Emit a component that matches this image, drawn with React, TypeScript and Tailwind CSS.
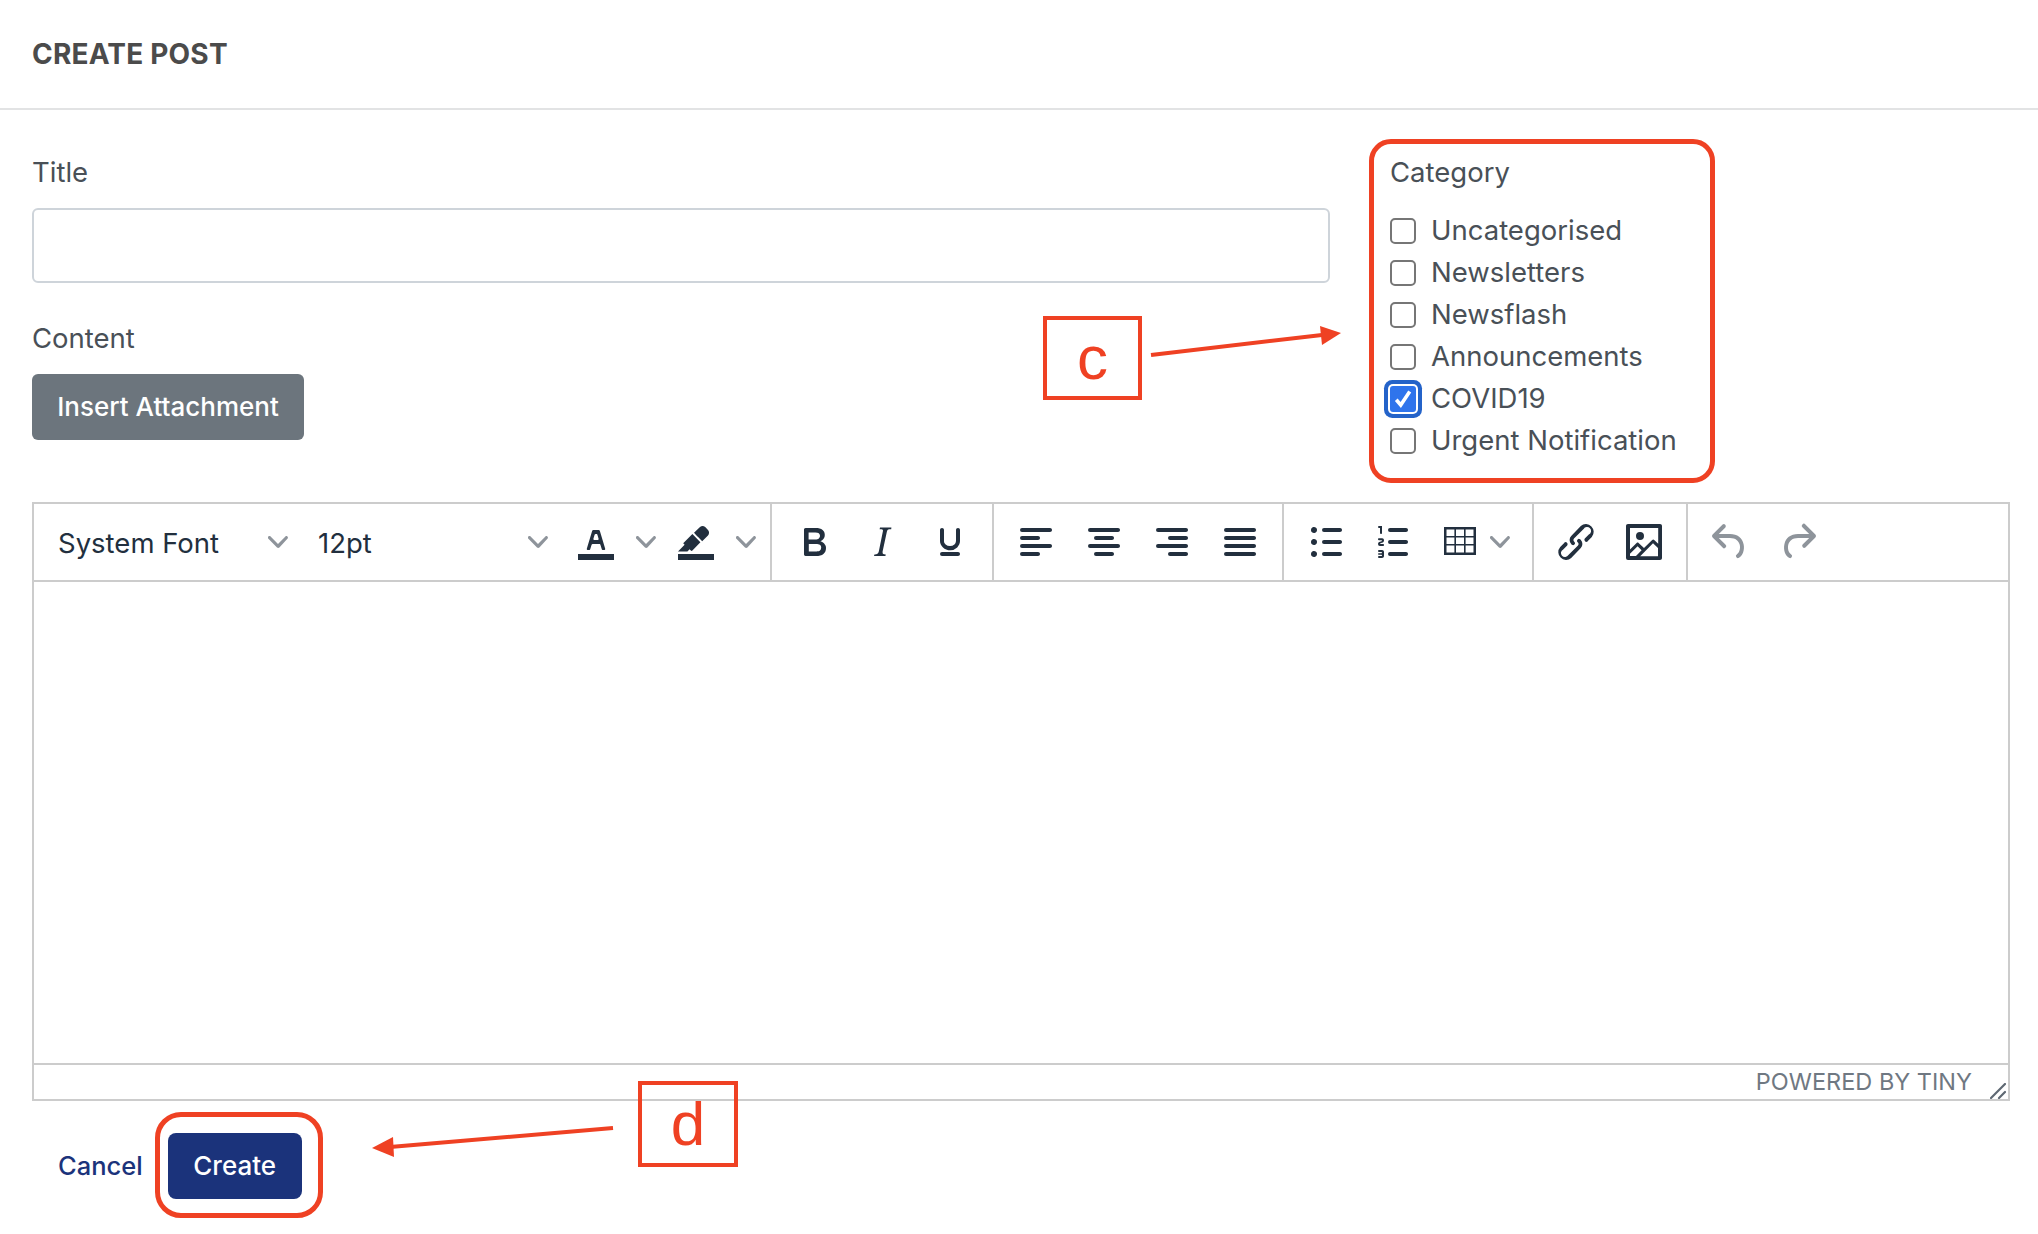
const F = "fill-[#222f3e]";

const Chevron = ({ className = "" }: { className?: string }) => (
  <svg viewBox="0 0 10 10" className={`w-5 h-5 fill-[#8e949b] shrink-0 ${className}`}>
    <path d="M8.7 2.2c.3-.3.8-.3 1 0 .4.4.4.9 0 1.2L5.7 7.8c-.3.3-.9.3-1.2 0L.2 3.4a.8.8 0 0 1 0-1.2c.3-.3.8-.3 1.1 0L5 6l3.7-3.8z" />
  </svg>
);

const Icon = ({ d, className = F }: { d: string; className?: string }) => (
  <svg viewBox="0 0 24 24" className={`w-12 h-12 shrink-0 ${className}`}>
    <path d={d} fillRule="evenodd" />
  </svg>
);

const ToolBtn = ({ d, className }: { d: string; className?: string }) => (
  <button className="w-[68px] h-[68px] flex items-center justify-center">
    <Icon d={d} className={className} />
  </button>
);

const icons = {
  bold: "M7.8 19c-.3 0-.5 0-.6-.2l-.2-.5V5.7c0-.2 0-.4.2-.5l.6-.2h5c1.5 0 2.7.3 3.5 1 .7.6 1.1 1.4 1.1 2.5a3 3 0 0 1-.6 1.9c-.4.6-1 1-1.6 1.2.4.1.9.3 1.3.6s.8.7 1 1.2c.4.4.5 1 .5 1.6 0 1.3-.4 2.3-1.3 3-.8.7-2.1 1-3.8 1H7.8zm5-8.3c.6 0 1.2-.1 1.6-.5.4-.3.6-.7.6-1.3 0-1.1-.8-1.7-2.3-1.7H9.3v3.5h3.4zm.5 6c.7 0 1.3-.1 1.7-.4.4-.4.6-.9.6-1.5s-.2-1-.7-1.4c-.4-.3-1-.4-2-.4H9.4v3.8h4z",
  italic: "M16.7 4.7l-.1.9h-.3c-.6 0-1 0-1.4.3-.3.3-.4.6-.5 1.1l-2.1 9.8v.6c0 .5.4.8 1.4.8h.2l-.2.8H8l.2-.8h.2c1.1 0 1.8-.5 2-1.5l2-9.8.1-.5c0-.6-.4-.8-1.4-.8h-.3l.2-.9h5.8z",
  underline: "M16 5c.6 0 1 .4 1 1v5.5a4 4 0 0 1-.4 1.8l-1 1.4a5.3 5.3 0 0 1-5.5 1 5 5 0 0 1-1.6-1c-.5-.4-.8-.9-1.1-1.4a4 4 0 0 1-.4-1.8V6c0-.6.4-1 1-1s1 .4 1 1v5.5c0 .3 0 .6.2 1l.6.7a3.3 3.3 0 0 0 2.2.8 3.4 3.4 0 0 0 2.2-.8c.3-.2.4-.5.6-.8l.2-.9V6c0-.6.4-1 1-1zM8 17h8c.6 0 1 .4 1 1s-.4 1-1 1H8a1 1 0 0 1 0-2z",
  left: "M5 5h14c.6 0 1 .4 1 1s-.4 1-1 1H5a1 1 0 1 1 0-2zm0 4h8c.6 0 1 .4 1 1s-.4 1-1 1H5a1 1 0 1 1 0-2zm0 8h8c.6 0 1 .4 1 1s-.4 1-1 1H5a1 1 0 0 1 0-2zm0-4h14c.6 0 1 .4 1 1s-.4 1-1 1H5a1 1 0 0 1 0-2z",
  center: "M5 5h14c.6 0 1 .4 1 1s-.4 1-1 1H5a1 1 0 1 1 0-2zm3 4h8c.6 0 1 .4 1 1s-.4 1-1 1H8a1 1 0 1 1 0-2zm0 8h8c.6 0 1 .4 1 1s-.4 1-1 1H8a1 1 0 0 1 0-2zm-3-4h14c.6 0 1 .4 1 1s-.4 1-1 1H5a1 1 0 0 1 0-2z",
  right: "M5 5h14c.6 0 1 .4 1 1s-.4 1-1 1H5a1 1 0 1 1 0-2zm6 4h8c.6 0 1 .4 1 1s-.4 1-1 1h-8a1 1 0 0 1 0-2zm0 8h8c.6 0 1 .4 1 1s-.4 1-1 1h-8a1 1 0 0 1 0-2zm-6-4h14c.6 0 1 .4 1 1s-.4 1-1 1H5a1 1 0 0 1 0-2z",
  justify: "M5 5h14c.6 0 1 .4 1 1s-.4 1-1 1H5a1 1 0 1 1 0-2zm0 4h14c.6 0 1 .4 1 1s-.4 1-1 1H5a1 1 0 1 1 0-2zm0 4h14c.6 0 1 .4 1 1s-.4 1-1 1H5a1 1 0 0 1 0-2zm0 4h14c.6 0 1 .4 1 1s-.4 1-1 1H5a1 1 0 0 1 0-2z",
  bullets: "M11 5h8c.6 0 1 .4 1 1s-.4 1-1 1h-8a1 1 0 0 1 0-2zm0 6h8c.6 0 1 .4 1 1s-.4 1-1 1h-8a1 1 0 0 1 0-2zm0 6h8c.6 0 1 .4 1 1s-.4 1-1 1h-8a1 1 0 0 1 0-2zM4.5 6c0-.4.1-.8.4-1 .3-.4.7-.5 1.1-.5.4 0 .8.1 1 .4.4.3.5.7.5 1.1 0 .4-.1.8-.4 1-.3.4-.7.5-1.1.5-.4 0-.8-.1-1-.4-.4-.3-.5-.7-.5-1.1zm0 6c0-.4.1-.8.4-1 .3-.4.7-.5 1.1-.5.4 0 .8.1 1 .4.4.3.5.7.5 1.1 0 .4-.1.8-.4 1-.3.4-.7.5-1.1.5-.4 0-.8-.1-1-.4-.4-.3-.5-.7-.5-1.1zm0 6c0-.4.1-.8.4-1 .3-.4.7-.5 1.1-.5.4 0 .8.1 1 .4.4.3.5.7.5 1.1 0 .4-.1.8-.4 1-.3.4-.7.5-1.1.5-.4 0-.8-.1-1-.4-.4-.3-.5-.7-.5-1.1z",
  numbers: "M10 17h8c.6 0 1 .4 1 1s-.4 1-1 1h-8a1 1 0 0 1 0-2zm0-6h8c.6 0 1 .4 1 1s-.4 1-1 1h-8a1 1 0 0 1 0-2zm0-6h8c.6 0 1 .4 1 1s-.4 1-1 1h-8a1 1 0 1 1 0-2zM6 4v3.5c0 .3-.2.5-.5.5a.5.5 0 0 1-.5-.5V5h-.5a.5.5 0 0 1 0-1H6zm-1 8.8l.2.2h1.3c.3 0 .5.2.5.5s-.2.5-.5.5H4.9a1 1 0 0 1-.9-1V13c0-.4.3-.8.6-1l1.2-.4.2-.3a.2.2 0 0 0-.2-.2H4.5a.5.5 0 0 1-.5-.5c0-.3.2-.5.5-.5h1.6c.5 0 .9.4.9 1v.1c0 .4-.3.8-.6 1l-1.2.4-.2.3zM7 17v2c0 .6-.4 1-1 1H4.5a.5.5 0 0 1 0-1h1.2c.2 0 .3-.1.3-.3 0-.2-.1-.3-.3-.3H4.4a.4.4 0 1 1 0-.8h1.3c.2 0 .3-.1.3-.3 0-.2-.1-.3-.3-.3H4.5a.5.5 0 1 1 0-1H6c.6 0 1 .4 1 1z",
  table: "M4 4.5h16v14H4zM5.25 5.75V9h3.95V5.75zM10 5.75V9h4V5.75zM14.8 5.75V9h3.95V5.75zM5.25 9.8V13h3.95V9.8zM10 9.8V13h4V9.8zM14.8 9.8V13h3.95V9.8zM5.25 13.8v3.45h3.95V13.8zM10 13.8v3.45h4V13.8zM14.8 13.8v3.45h3.95V13.8z",
  link: "M6.2 12.3a1 1 0 0 1 1.4 1.4l-2 2a2 2 0 1 0 2.6 2.8l4.8-4.8a1 1 0 0 0 0-1.4 1 1 0 1 1 1.4-1.3 2.9 2.9 0 0 1 0 4L9.6 20a3.9 3.9 0 0 1-5.5-5.5l2-2zm11.6-.6a1 1 0 0 1-1.4-1.4l2-2a2 2 0 1 0-2.6-2.8L11 10.3a1 1 0 0 0 0 1.4A1 1 0 1 1 9.6 13a2.9 2.9 0 0 1 0-4L14.4 4a3.9 3.9 0 0 1 5.5 5.5l-2 2z",
  image: "M5 15.7l3.3-3.2c.3-.3.7-.3 1 0L12 15l4.1-4c.3-.4.8-.4 1 0l2 1.9V5H5v10.7zM5 18V19h3l2.8-2.9-2-2L5 17.9zm14-3l-2.5-2.4-6.4 6.5H19v-4zM4 3h16c.6 0 1 .4 1 1v16c0 .6-.4 1-1 1H4a1 1 0 0 1-1-1V4c0-.6.4-1 1-1zm6 8a2 2 0 1 0 0-4 2 2 0 0 0 0 4z",
  undo: "M6.4 8H12c3.7 0 6.2 2 6.8 5.1.6 2.7-.4 5.6-2.3 6.8a1 1 0 0 1-1-1.8c1.1-.6 1.8-2.7 1.4-4.6-.5-2.1-2.1-3.5-4.9-3.5H6.4l3.3 3.3a1 1 0 1 1-1.4 1.4l-5-5a1 1 0 0 1 0-1.4l5-5a1 1 0 0 1 1.4 1.4L6.4 8z",
  redo: "M17.6 10H12c-2.8 0-4.4 1.4-4.9 3.5-.4 2 .3 4 1.4 4.6a1 1 0 1 1-1 1.8c-2-1.2-2.9-4.1-2.3-6.8.6-3 3-5.1 6.8-5.1h5.6l-3.3-3.3a1 1 0 1 1 1.4-1.4l5 5a1 1 0 0 1 0 1.4l-5 5a1 1 0 0 1-1.4-1.4l3.3-3.3z",
  textColor: "M3 18h18v3H3zM8.7 16h-.8a.5.5 0 0 1-.5-.6l2.7-9c.1-.3.3-.4.5-.4h2.8c.2 0 .4.1.5.4l2.7 9a.5.5 0 0 1-.5.6h-.8a.5.5 0 0 1-.4-.4l-.7-2.2c0-.3-.3-.4-.5-.4h-3.4c-.2 0-.4.1-.5.4l-.7 2.2c0 .3-.2.4-.4.4zm2.6-7.6l-.6 2a.5.5 0 0 0 .5.6h1.6a.5.5 0 0 0 .5-.6l-.6-2c0-.3-.3-.4-.5-.4h-.4c-.2 0-.4.1-.5.4z",
  highlight: "M3 18h18v3H3zM7.7 16.7H3l3.3-3.3-.7-.8L10.2 8l4 4.1-4 4.2c-.2.2-.6.2-.8 0l-.6-.7-1.1 1.1zm5-7.5L11 7.4l3-2.9a2 2 0 0 1 2.6 0L18 6c.7.7.7 2 0 2.7l-2.9 2.9-1.8-1.8-.5-.6",
};

const categories = [
  { name: "Uncategorised", checked: false },
  { name: "Newsletters", checked: false },
  { name: "Newsflash", checked: false },
  { name: "Announcements", checked: false },
  { name: "COVID19", checked: true },
  { name: "Urgent Notification", checked: false },
];

const CategoryRow = ({ name, checked }: { name: string; checked: boolean }) => (
  <div className="h-[42px] flex items-center gap-[15px]">
    {checked ? (
      <span className="w-[26px] h-[26px] rounded-[3px] bg-[#2f74ec] flex items-center justify-center shadow-[0_0_0_2px_#fff,0_0_0_6px_#2463c9]">
        <svg viewBox="0 0 16 16" className="w-[24px] h-[24px] fill-none stroke-white stroke-[2.4]">
          <path d="M3.5 8.5l3 3.5L12.5 3" />
        </svg>
      </span>
    ) : (
      <span className="w-[26px] h-[26px] rounded-[5px] border-2 border-[#767676] bg-white" />
    )}
    <span className="text-[27.5px] text-[#495057]">{name}</span>
  </div>
);

export default function App() {
  return (
    <div className="relative w-[2038px] h-[1234px] overflow-hidden bg-white font-['Inter',sans-serif]">
      <header className="h-[110px] border-b-2 border-[#e2e3e4] px-8 flex items-center">
        <h1 className="text-[28px] font-bold text-[#4b4b4b] tracking-[0.2px]">CREATE POST</h1>
      </header>

      <main className="px-8 pt-[43px]">
        <div className="flex gap-[60px]">
          <div className="w-[1298px]">
            <label className="block h-9 pt-px leading-9 text-[27.5px] text-[#495057]">Title</label>
            <input className="block mt-[19px] w-full h-[75px] rounded-[6px] border-2 border-[#ced4da] bg-white" />
            <label className="block mt-[37px] h-9 leading-9 text-[27.5px] text-[#495057]">Content</label>
            <button className="block mt-[18px] w-[272px] h-[66px] pb-[2px] rounded-[6px] bg-[#6c757d] text-[26px] font-medium text-white">
              Insert Attachment
            </button>
          </div>
          <div>
            <div className="h-9 pt-px leading-9 text-[27.5px] text-[#495057]">Category</div>
            <div className="mt-[21px]">
              {categories.map((c) => (
                <CategoryRow key={c.name} name={c.name} checked={c.checked} />
              ))}
            </div>
          </div>
        </div>

        <section className="mt-10 w-[1978px] h-[599px] border-2 border-[#cccccc] flex flex-col text-[#222f3e]">
          <div className="h-[78px] border-b-2 border-[#cccccc] flex items-center shrink-0">
            <div className="w-[736px] h-full flex items-center">
              <div className="w-[260px] pl-6 pr-[6px] flex items-center justify-between text-[27.5px]">
                <span className="pt-[3px]">System Font</span>
                <Chevron />
              </div>
              <div className="w-[260px] pl-6 pr-[6px] flex items-center justify-between text-[27.5px]">
                <span className="pt-[3px]">12pt</span>
                <Chevron />
              </div>
              <Icon d={icons.textColor} className={`ml-[18px] ${F}`} />
              <Chevron className="ml-4" />
              <Icon d={icons.highlight} className={`ml-4 ${F}`} />
              <Chevron className="ml-4" />
            </div>
            <div className="h-full border-l-2 border-[#cccccc] px-2 flex items-center">
              <ToolBtn d={icons.bold} />
              <ToolBtn d={icons.italic} />
              <ToolBtn d={icons.underline} />
            </div>
            <div className="h-full border-l-2 border-[#cccccc] px-2 flex items-center">
              <ToolBtn d={icons.left} />
              <ToolBtn d={icons.center} />
              <ToolBtn d={icons.right} />
              <ToolBtn d={icons.justify} />
            </div>
            <div className="h-full w-[250px] border-l-2 border-[#cccccc] pl-2 flex items-center">
              <ToolBtn d={icons.bullets} />
              <ToolBtn d={icons.numbers} />
              <Icon d={icons.table} className={`ml-2 ${F}`} />
              <Chevron className="ml-[6px]" />
            </div>
            <div className="h-full border-l-2 border-[#cccccc] px-2 flex items-center">
              <ToolBtn d={icons.link} />
              <ToolBtn d={icons.image} />
            </div>
            <div className="h-full border-l-2 border-[#cccccc] px-2 flex items-center">
              <ToolBtn d={icons.undo} className="fill-[#8e949b]" />
              <ToolBtn d={icons.redo} className="fill-[#8e949b]" />
            </div>
          </div>
          <div className="flex-1" />
          <div className="relative h-[36px] border-t-2 border-[#cccccc] shrink-0 flex items-center justify-end pr-9 text-[23.5px] text-[#6f7882]">
            <span>POWERED BY TINY</span>
            <svg viewBox="0 0 16 16" className="absolute right-[2px] bottom-0 w-4 h-4 stroke-[#5f6873] stroke-[2.2] fill-none">
              <path d="M1 15L15 1M9 15l6-6" strokeLinecap="round" />
            </svg>
          </div>
        </section>

        <div className="mt-8 flex items-center">
          <a className="ml-[26px] text-[25.5px] font-medium text-[#1b337b]">Cancel</a>
          <button className="ml-[25px] w-[134px] h-[66px] pb-[2px] rounded-[8px] bg-[#1b337b] text-[26px] font-medium text-white">
            Create
          </button>
        </div>
      </main>

      {/* annotation layer */}
      <div className="absolute left-[1369px] top-[139px] w-[346px] h-[344px] rounded-[22px] border-[5px] border-[#ef4123]" />
      <div className="absolute left-[155px] top-[1112px] w-[168px] h-[106px] rounded-[26px] border-[5px] border-[#ef4123]" />
      <div className="absolute left-[1043px] top-[316px] w-[99px] h-[84px] border-4 border-[#ef4123] flex items-center justify-center text-[62px] leading-none text-[#ef4123] font-['Liberation_Sans',sans-serif]">
        c
      </div>
      <div className="absolute left-[638px] top-[1081px] w-[100px] h-[86px] border-4 border-[#ef4123] flex items-center justify-center text-[62px] leading-none text-[#ef4123] font-['Liberation_Sans',sans-serif]">
        d
      </div>
      <svg className="absolute left-[1140px] top-[320px] w-[210px] h-[40px]" viewBox="0 0 210 40">
        <path d="M11 35L182 15" className="stroke-[#ef4123] stroke-[4]" />
        <path d="M201 13L180 6l2 19z" className="fill-[#ef4123]" />
      </svg>
      <svg className="absolute left-[360px] top-[1120px] w-[260px] h-[40px]" viewBox="0 0 260 40">
        <path d="M253 8L30 27" className="stroke-[#ef4123] stroke-[4]" />
        <path d="M12 28L33 17l1 20z" className="fill-[#ef4123]" />
      </svg>
    </div>
  );
}
